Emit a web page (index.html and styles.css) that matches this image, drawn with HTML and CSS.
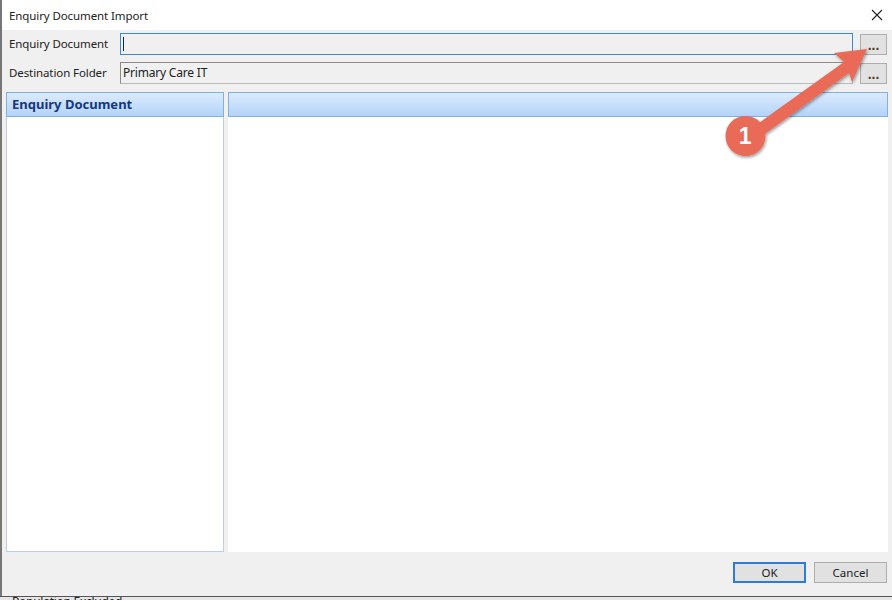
FILE: index.html
```html
<!DOCTYPE html>
<html lang="en">
<head>
<meta charset="utf-8">
<title>Enquiry Document Import</title>
<link rel="stylesheet" href="styles.css">
</head>
<body>
<div class="window">
  <header class="titlebar">
    <span class="title">Enquiry Document Import</span>
    <svg class="close" width="12" height="12" viewBox="0 0 12 12"><path d="M1 1 L11 11 M11 1 L1 11" stroke="#222" stroke-width="1.1" fill="none"/></svg>
  </header>
  <main class="dialog">
    <div class="form">
      <div class="row">
        <label class="label">Enquiry Document</label>
        <div class="field focused"><span class="caret"></span></div>
        <button class="browse">...</button>
      </div>
      <div class="row">
        <label class="label">Destination Folder</label>
        <div class="field">Primary Care IT</div>
        <button class="browse">...</button>
      </div>
    </div>
    <div class="panels">
      <section class="panel left">
        <div class="panel-head">Enquiry Document</div>
        <div class="panel-body bordered"></div>
      </section>
      <section class="panel right">
        <div class="panel-head"></div>
        <div class="panel-body"></div>
      </section>
    </div>
    <footer class="actions">
      <button class="action default">OK</button>
      <button class="action">Cancel</button>
    </footer>
  </main>
  <div class="under"><span>Population Excluded</span></div>
</div>
<svg class="annotation" width="892" height="600" viewBox="0 0 892 600">
  <defs>
    <filter id="shadow" x="-20%" y="-20%" width="140%" height="140%">
      <feDropShadow dx="1" dy="1.5" stdDeviation="1.5" flood-color="#000" flood-opacity="0.4"/>
    </filter>
  </defs>
  <g filter="url(#shadow)" fill="#e96a57">
    <path d="M752 128 L844 62 L834 53 L867 49 L852 82 L849 73 L758 139 Z"/>
    <circle cx="745.5" cy="136" r="20"/>
  </g>
</svg>
<span class="badge">1</span>
</body>
</html>
```
FILE: styles.css
```css
* { box-sizing: border-box; }
html, body { margin: 0; padding: 0; height: 600px; overflow: hidden; }
body { position: relative; background: #fff; font-family: "Noto Sans", "DejaVu Sans", sans-serif; font-size: 11.5px; letter-spacing: -0.1px; color: #222; }
.window { height: 600px; display: flex; flex-direction: column; border-left: 2px solid #777; }
.titlebar { height: 30px; flex: none; background: #fff; display: flex; align-items: center; justify-content: space-between; padding: 0 9px 0 7px; }
.close { display: block; }
.dialog { height: 566px; flex: none; background: #f0f0f0; display: flex; flex-direction: column; }
.form { display: flex; flex-direction: column; gap: 7px; padding: 3px 5px 0 7px; }
.row { display: flex; align-items: center; height: 22px; }
.label { width: 111px; flex: none; padding-bottom: 1px; }
.field { flex: 1; height: 22px; margin-right: 7px; background: #f0f0f0; border: 1px solid #8a8a8a; border-bottom-color: #bbb; border-right-color: #bbb; padding: 0 2px 2px; font-size: 12px; letter-spacing: -0.2px; display: flex; align-items: center; }
.field.focused { border: 1px solid #3d86d8; padding-bottom: 0; }
.caret { width: 1px; height: 14px; background: #222; }
.browse { width: 27px; height: 21px; flex: none; padding: 2px 0 0; background: #e1e1e1; border: 1px solid #adadad; font-family: "Liberation Sans", sans-serif; font-size: 14px; font-weight: 700; letter-spacing: 0; color: #4a3a30; line-height: 1; }
.panels { height: 460px; flex: none; margin-top: 8px; padding: 0 4px 0 4px; display: flex; gap: 4px; }
.panel { display: flex; flex-direction: column; }
.left { width: 218px; flex: none; }
.right { flex: 1; }
.panel-head { height: 25px; flex: none; background: linear-gradient(#dcebfd, #b3d3fa); border: 1px solid #7fb0e6; color: #15387c; font-weight: 700; font-size: 13px; letter-spacing: 0; line-height: 23px; padding-left: 5px; }
.panel-body { flex: 1; background: #fff; }
.bordered { border: 1px solid #bccde6; border-top: 0; }
.actions { flex: 1; display: flex; justify-content: flex-end; gap: 8px; padding: 10px 5px 0 0; }
.action { width: 73px; height: 21px; padding: 0; background: #e1e1e1; border: 1px solid #adadad; font: inherit; color: #222; }
.action.default { border: 2px solid #2f7bd9; }
.under { flex: 1; background: #e6e6e6; border-top: 1px solid #555; margin-left: -2px; padding-left: 12px; font-size: 12px; letter-spacing: -0.25px; line-height: 9px; overflow: hidden; }
.annotation { position: absolute; left: 0; top: 0; }
.badge { position: absolute; left: 725px; top: 116px; width: 40px; height: 40px; text-align: center; line-height: 40px; color: #fff; font-family: "Liberation Sans", sans-serif; font-weight: 700; font-size: 23px; }
```
